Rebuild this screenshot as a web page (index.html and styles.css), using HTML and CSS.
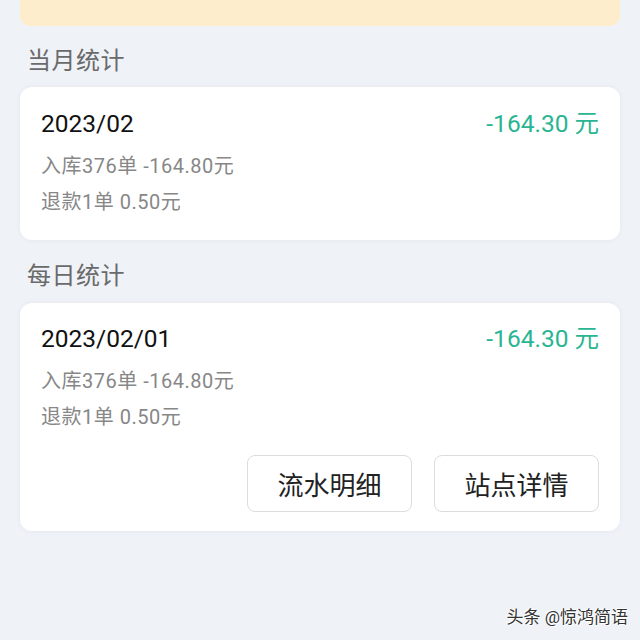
FILE: index.html
```html
<!DOCTYPE html>
<html lang="zh-CN">
<head>
<meta charset="utf-8">
<link rel="stylesheet" href="styles.css">
</head>
<body>
<div class="page">
  <div class="banner"></div>
  <div class="section-title">当月统计</div>
  <div class="card">
    <div class="card-head">
      <span class="date">2023/02</span>
      <span class="amount">-164.30 元</span>
    </div>
    <div class="line">入库376单 -164.80元</div>
    <div class="line">退款1单 0.50元</div>
  </div>
  <div class="section-title second">每日统计</div>
  <div class="card card-daily">
    <div class="card-head">
      <span class="date">2023/02/01</span>
      <span class="amount">-164.30 元</span>
    </div>
    <div class="line">入库376单 -164.80元</div>
    <div class="line">退款1单 0.50元</div>
    <div class="actions">
      <div class="btn">流水明细</div>
      <div class="btn">站点详情</div>
    </div>
  </div>
</div>
<div class="watermark">头条 @惊鸿简语</div>
</body>
</html>
```
FILE: styles.css
```css
html, body {
  margin: 0;
  padding: 0;
}
body {
  width: 640px;
  height: 640px;
  overflow: hidden;
  background: #eff2f7;
  font-family: "Roboto", "Noto Sans CJK SC", sans-serif;
  position: relative;
}
.page {
  padding: 0 20px;
}
.banner {
  height: 26px;
  background: #fdedcd;
  border-radius: 0 0 10px 10px;
}
.section-title {
  height: 30px;
  line-height: 30px;
  font-size: 24px;
  color: #6a6a6a;
  padding-left: 7px;
  margin: 20px 0 11px;
  letter-spacing: 0.5px;
}
.section-title.second {
  margin: 21px 0 12px;
}
.card {
  background: #ffffff;
  border-radius: 12px;
  padding: 20px 21px 20px 21px;
  box-shadow: 0 0 4px rgba(200, 205, 220, 0.25);
}
.card-daily {
  padding-top: 19px;
  padding-bottom: 19px;
}
.card-head {
  display: flex;
  justify-content: space-between;
  align-items: center;
  height: 34px;
  margin-bottom: 7px;
}
.date {
  font-size: 24.5px;
  color: #111111;
  line-height: 34px;
}
.amount {
  font-size: 24.5px;
  color: #2ab592;
  line-height: 34px;
}
.line {
  font-size: 20px;
  line-height: 36px;
  color: #878787;
  letter-spacing: 0.5px;
}
.actions {
  display: flex;
  justify-content: flex-end;
  gap: 22px;
  margin-top: 20px;
}
.btn {
  width: 163px;
  height: 55px;
  border: 1px solid #dcdcdc;
  border-radius: 8px;
  display: flex;
  align-items: center;
  justify-content: center;
  font-size: 26px;
  color: #222222;
}
.watermark {
  position: absolute;
  right: 12px;
  bottom: 12px;
  font-size: 17px;
  color: #333333;
  text-shadow: 1px 1px 0 #ffffff, -1px -1px 0 #ffffff;
}
```
